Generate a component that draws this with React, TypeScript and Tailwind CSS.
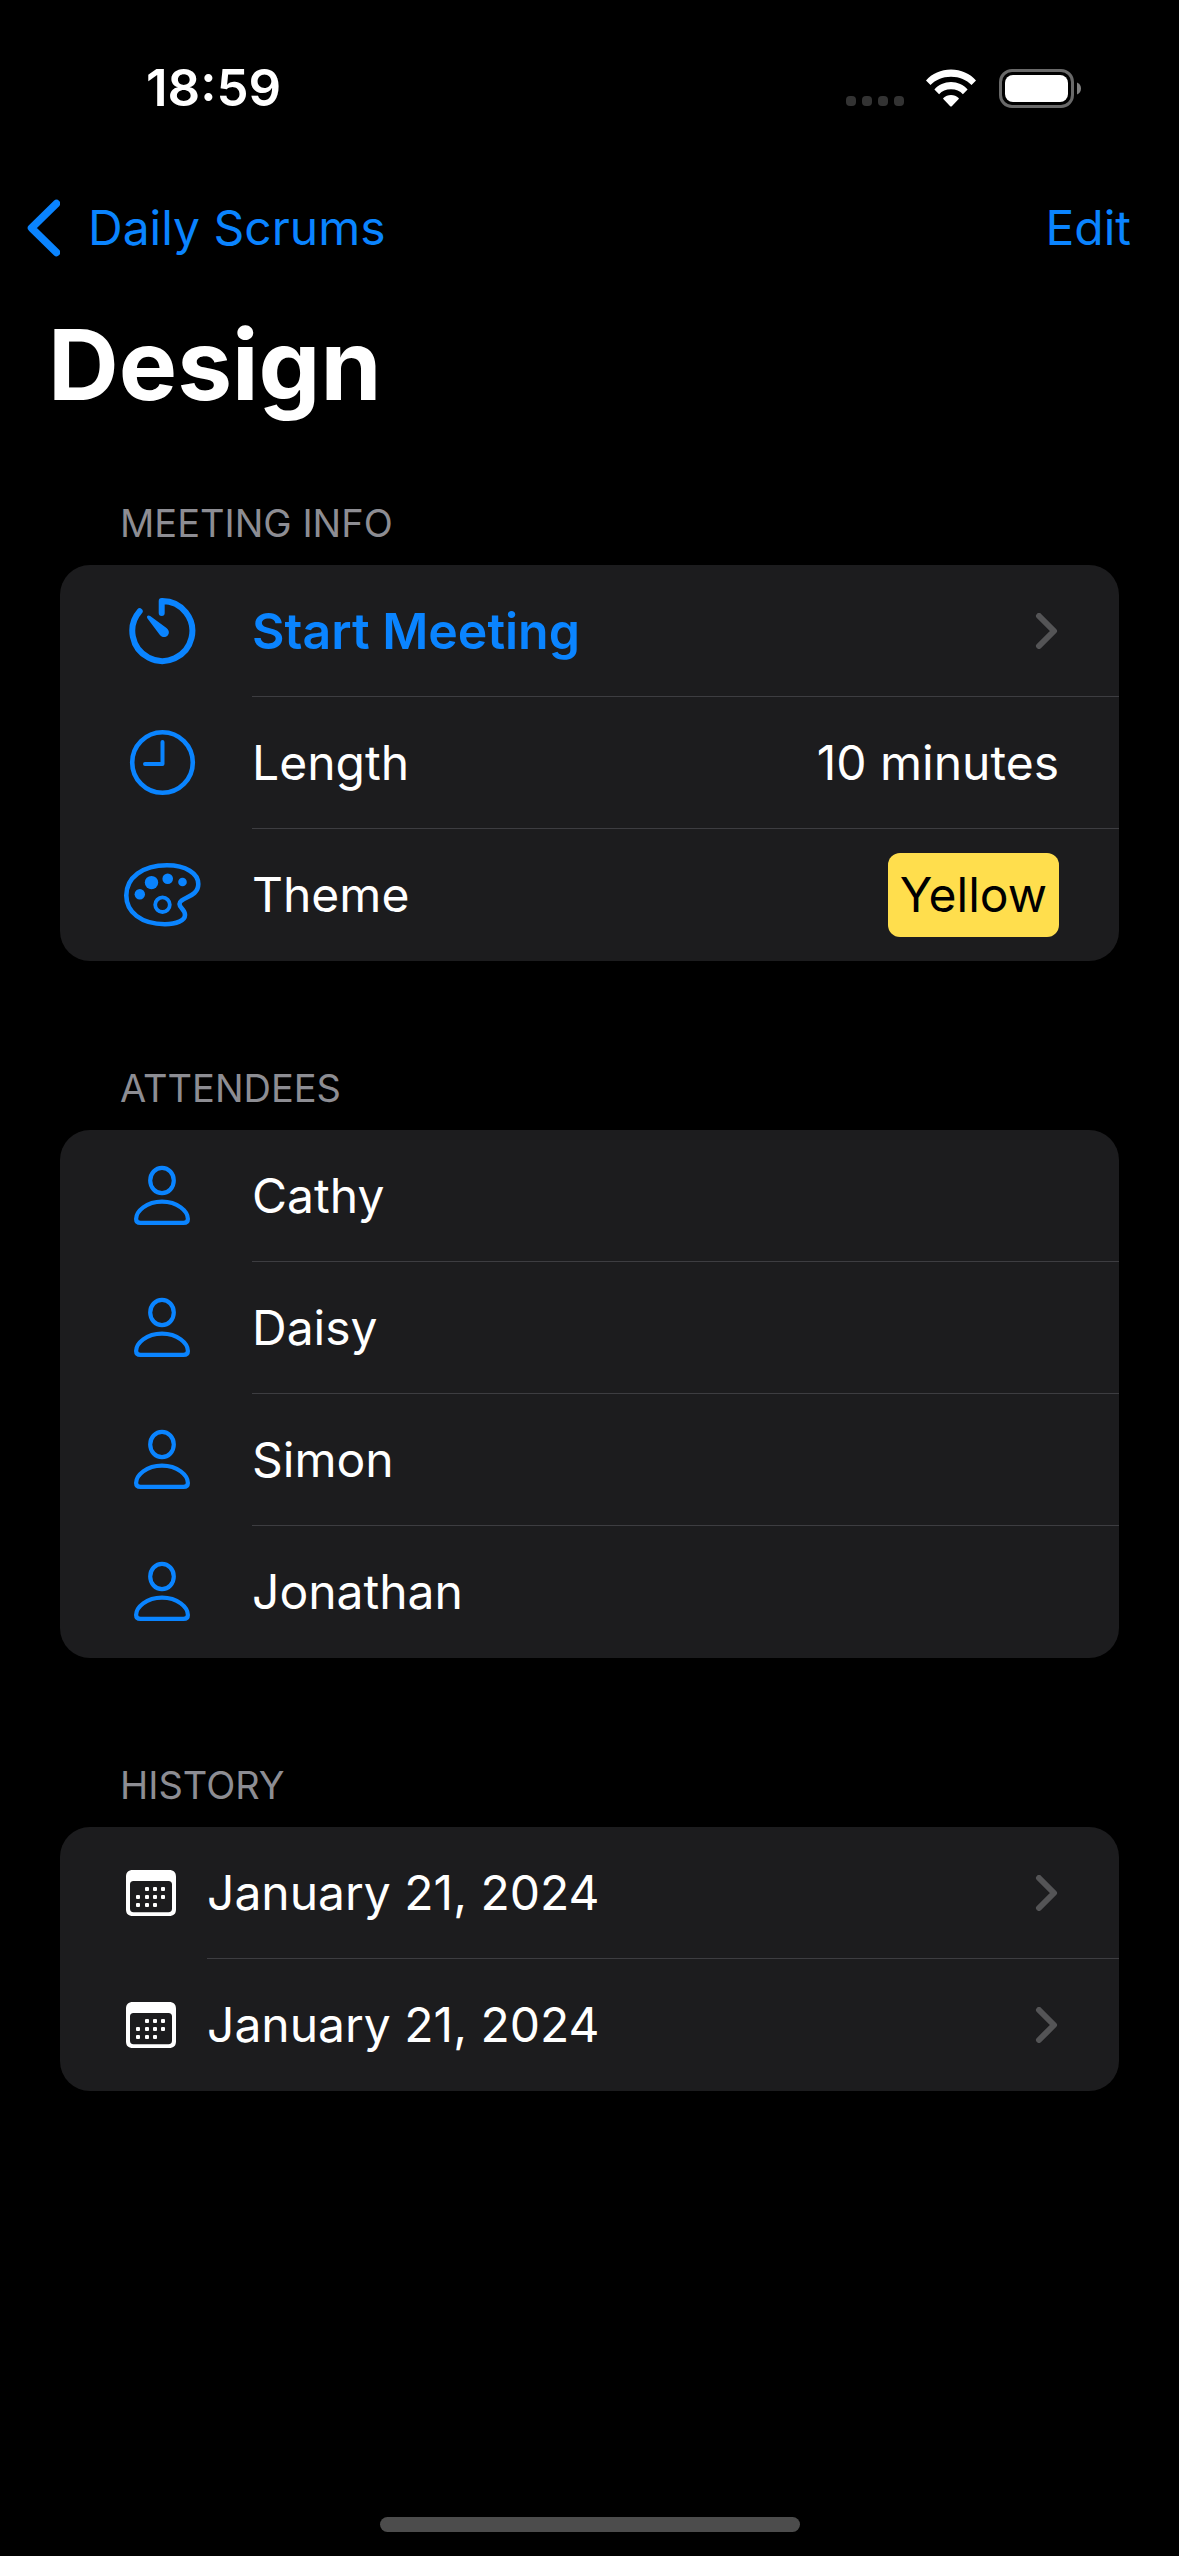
import type { ReactNode } from "react";

const BLUE = "#0a84ff";

function WifiIcon() {
  return (
    <svg width="52" height="38" viewBox="0 0 52 38" fill="#fff" aria-hidden="true">
      <path d="M26 0.5C36 0.5 45 4.600 51 11.500L46.500 16C41.500 11 34.500 7.800 26 7.800S10.500 11 5.500 16L1 11.500C7 4.600 16 0.500 26 0.500Z" />
      <path d="M26 13C32.500 13 38.500 15.800 42.600 20.500L37.900 25.200C35 22 31 20.200 26 20.200S17 22 14.100 25.200L9.400 20.500C13.500 15.800 19.500 13 26 13Z" />
      <path d="M26 26C28.900 26 31.600 27 33.600 28.900C34 29.300 34 29.600 33.700 29.900L26.800 37.200C26.300 37.700 25.700 37.700 25.200 37.200L18.300 29.900C18 29.600 18 29.300 18.400 28.900C20.400 27 23.100 26 26 26Z" />
    </svg>
  );
}

function BatteryIcon() {
  return (
    <svg width="82" height="39" viewBox="0 0 82 39" aria-hidden="true">
      <rect x="1.500" y="1.500" width="72" height="36" rx="11.500" fill="none" stroke="#696969" strokeWidth="3" />
      <rect x="6" y="6" width="63" height="27" rx="8" fill="#fff" />
      <path d="M78 13.500C80.500 14.500 82 16.800 82 19.500S80.500 24.500 78 25.500Z" fill="#808080" />
    </svg>
  );
}

function BackChevron() {
  return (
    <svg width="34" height="58" viewBox="0 0 34 58" fill="none" stroke={BLUE} strokeWidth="7.500" strokeLinecap="round" strokeLinejoin="round" aria-hidden="true">
      <path d="M30.500 4.500L5.500 29L30.500 53.500" />
    </svg>
  );
}

function Chevron() {
  return (
    <svg width="24" height="36" viewBox="0 0 24 36" fill="none" stroke="#545456" strokeWidth="6" strokeLinecap="round" strokeLinejoin="round" aria-hidden="true">
      <path d="M4 3L19 18L4 33" />
    </svg>
  );
}

function TimerIcon() {
  return (
    <svg width="80" height="72" viewBox="0 0 80 72" aria-hidden="true">
      <path d="M39.700 18V6H40.200A30 30 0 1 1 17.700 16.300" fill="none" stroke={BLUE} strokeWidth="6" strokeLinecap="round" strokeLinejoin="round" />
      <path d="M28.200 21L44.500 33C47.500 35.500 47.500 38.500 45.500 40.700C43.300 42.900 39.700 42.500 37.700 39.700L25.500 23.500C24 21 26.200 19.500 28.200 21Z" fill={BLUE} />
    </svg>
  );
}

function ClockIcon() {
  return (
    <svg width="80" height="72" viewBox="0 0 80 72" fill="none" stroke={BLUE} strokeLinecap="round" strokeLinejoin="round" aria-hidden="true">
      <circle cx="40.500" cy="35.500" r="30.300" strokeWidth="4.600" />
      <path d="M40.500 15V37H23" strokeWidth="4" />
    </svg>
  );
}

function PaletteIcon() {
  return (
    <svg width="80" height="72" viewBox="0 0 80 72" fill="none" stroke={BLUE} aria-hidden="true">
      <path d="M45 6.300C64 6.300 76.300 14.500 76.300 25C76.300 39 57.500 38 57.500 45C57.500 49 63 50.500 63 56C63 61.500 54.500 65.200 43 65.200C19 65.200 4.300 53 4.300 36.500C4.300 18.500 20.500 6.300 45 6.300Z" strokeWidth="4.600" />
      <circle cx="40.500" cy="45.700" r="7.300" strokeWidth="3.800" />
      <g fill={BLUE} stroke="none">
        <circle cx="17.800" cy="35.300" r="5.200" />
        <circle cx="29.500" cy="23.600" r="6.700" />
        <circle cx="45.700" cy="19.700" r="5.300" />
        <circle cx="60.500" cy="23" r="4.300" />
      </g>
    </svg>
  );
}

function PersonIcon() {
  return (
    <svg width="80" height="72" viewBox="0 0 80 72" fill="none" stroke={BLUE} strokeWidth="4.200" strokeLinejoin="round" aria-hidden="true">
      <ellipse cx="40" cy="20.500" rx="11.800" ry="12.700" />
      <path d="M18.500 62.900H61.500C64.500 62.900 65.900 61.500 65.900 59C65.900 51 55.500 41.700 40 41.700S14.100 51 14.100 59C14.100 61.500 15.500 62.900 18.500 62.900Z" />
    </svg>
  );
}

const DAY_DOTS = [
  [21, 19], [29, 19], [37, 19],
  [12, 27], [21, 27], [29, 27], [37, 27],
  [12, 35], [21, 35], [29, 35],
];

function CalendarIcon() {
  return (
    <svg width="50" height="46" viewBox="0 0 50 46" fill="#fff" aria-hidden="true">
      <path fillRule="evenodd" d="M7 0H43C47.700 0 50 2.300 50 6.800V39.200C50 43.700 47.700 46 43 46H7C2.300 46 0 43.700 0 39.200V6.800C0 2.300 2.300 0 7 0ZM7.500 11C5.200 11 4 12.200 4 14.500V38.500C4 41 5.200 42.200 7.500 42.200H42.500C44.800 42.200 46 41 46 38.500V14.500C46 12.200 44.800 11 42.500 11Z" />
      {DAY_DOTS.map(([x, y]) => (
        <rect key={`${x}-${y}`} x={x - 2} y={y - 2} width="4" height="4" rx="1" />
      ))}
    </svg>
  );
}

function Section({ title, children }: { title: string; children: ReactNode }) {
  return (
    <section className="mb-[101px] px-[60px]">
      <h2 className="mb-4 px-[60px] text-[38px] leading-[52px] text-[#8d8d93] uppercase">{title}</h2>
      <ul className="overflow-hidden rounded-[30px] bg-[#1c1c1e]">{children}</ul>
    </section>
  );
}

const ROW = "flex h-[132px] w-full items-center pl-[60px] text-left";

function Row({ icon, last, children }: { icon: ReactNode; last?: boolean; children: ReactNode }) {
  return (
    <div className={ROW}>
      <span className="mr-[50px] flex w-[82px] shrink-0 justify-end">{icon}</span>
      <Line last={last}>{children}</Line>
    </div>
  );
}

function Line({ last, children }: { last?: boolean; children: ReactNode }) {
  return (
    <span className={`flex h-full min-w-0 flex-1 items-center justify-between border-b pr-[60px] ${last ? "border-transparent" : "border-[#3d3d41]"}`}>
      {children}
    </span>
  );
}

export default function App() {
  const attendees = ["Cathy", "Daisy", "Simon", "Jonathan"];
  const history = ["January 21, 2024", "January 21, 2024"];
  return (
    <div className="flex min-h-screen flex-col bg-black font-['Inter',sans-serif] text-[48px] leading-[60px] text-white">
      <div className="flex h-[176px] items-center justify-between pr-[98px] pl-[146px]">
        <time className="text-[51px] font-semibold">18:59</time>
        <div className="flex items-center">
          <div className="mt-[26px] mr-[21px] flex gap-1.5">
            {[0, 1, 2, 3].map((i) => (
              <span key={i} className="size-2.5 rounded bg-[#333333]" />
            ))}
          </div>
          <span className="mr-[22px]"><WifiIcon /></span>
          <BatteryIcon />
        </div>
      </div>

      <nav className="flex h-[104px] items-center justify-between pr-12 pl-[26px] text-[#0a84ff]">
        <button type="button" className="flex items-center gap-7">
          <BackChevron />
          Daily Scrums
        </button>
        <button type="button">Edit</button>
      </nav>

      <h1 className="px-12 pt-[25px] text-[98px] leading-[120px] font-bold">Design</h1>

      <main className="flex-1 pt-[72px]">
        <Section title="Meeting Info">
          <li>
            <a href="#meeting" className="block text-[50px] font-semibold text-[#0a84ff]">
              <Row icon={<TimerIcon />}>
                Start Meeting
                <Chevron />
              </Row>
            </a>
          </li>
          <li>
            <Row icon={<ClockIcon />}>
              <span>Length</span>
              <span>10 minutes</span>
            </Row>
          </li>
          <li>
            <Row icon={<PaletteIcon />} last>
              <span>Theme</span>
              <span className="rounded-xl bg-[#ffde4d] px-3 py-3 text-black">Yellow</span>
            </Row>
          </li>
        </Section>

        <Section title="Attendees">
          {attendees.map((name, i) => (
            <li key={name}>
              <Row icon={<PersonIcon />} last={i === attendees.length - 1}>{name}</Row>
            </li>
          ))}
        </Section>

        <Section title="History">
          {history.map((date, i) => (
            <li key={i}>
              <a href="#history" className={ROW}>
                <span className="mr-[31px] ml-[6px]"><CalendarIcon /></span>
                <Line last={i === history.length - 1}>
                  {date}
                  <Chevron />
                </Line>
              </a>
            </li>
          ))}
        </Section>
      </main>

      <div className="mx-auto mb-6 h-[15px] w-[420px] rounded-full bg-[#4c4c4c]" />
    </div>
  );
}
